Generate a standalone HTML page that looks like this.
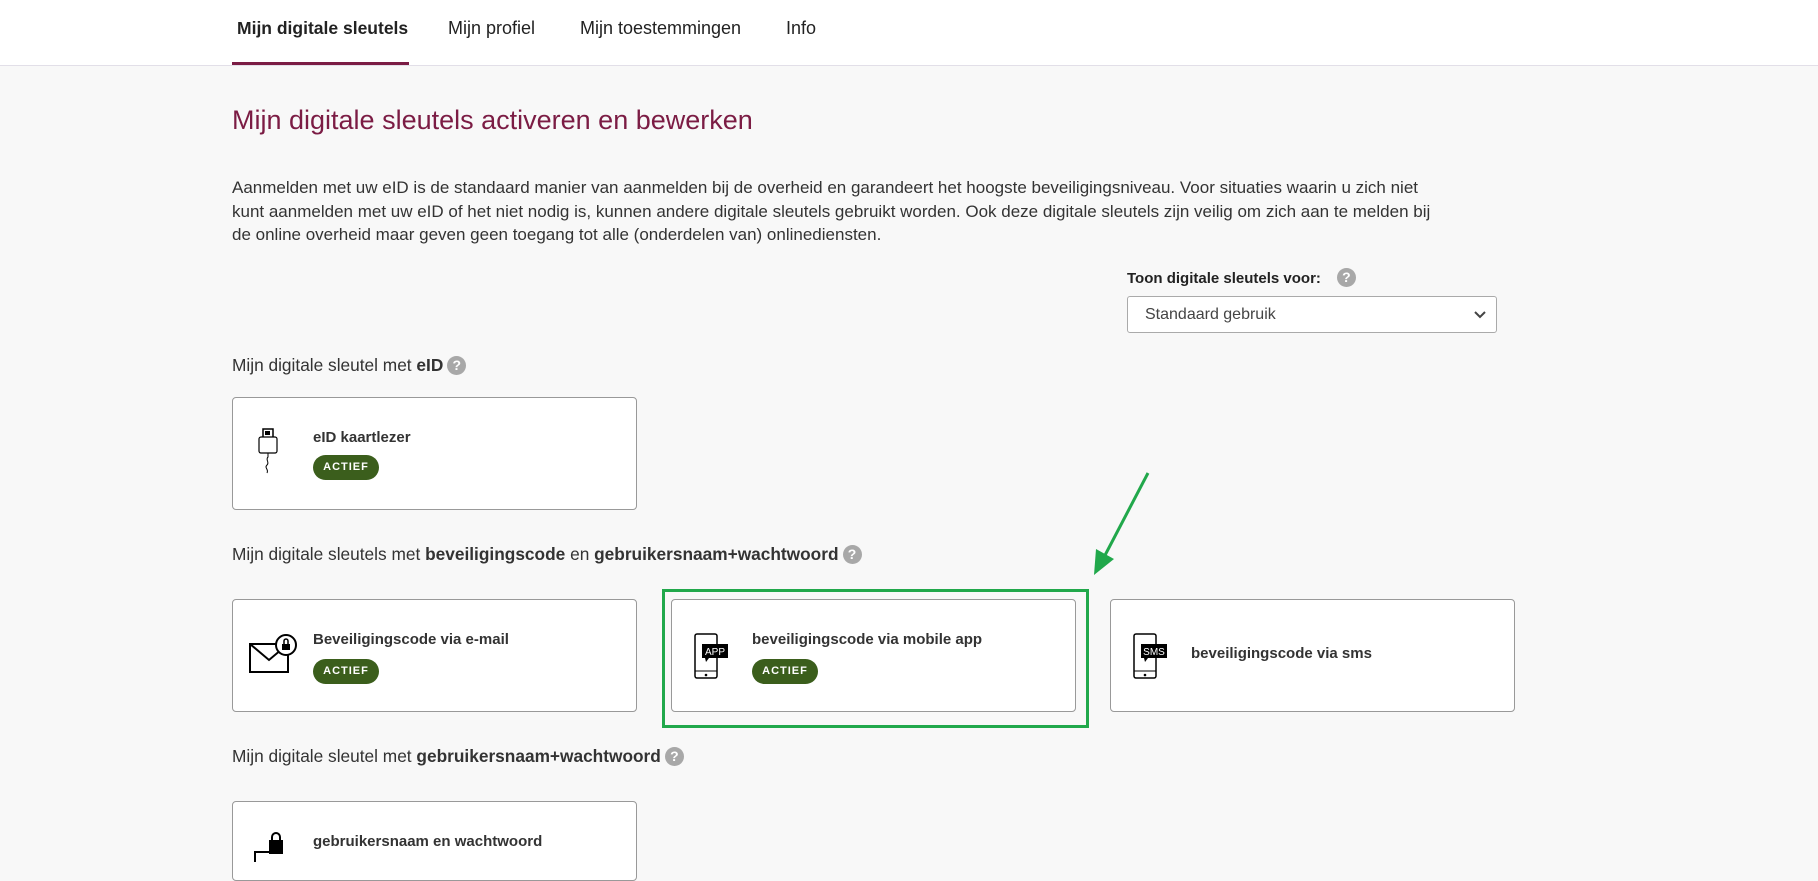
<!DOCTYPE html>
<html><head><meta charset="utf-8"><style>
*{box-sizing:border-box;margin:0;padding:0}
body{width:1818px;height:853px;overflow:hidden;background:#f8f8f8;font-family:"Liberation Sans",sans-serif;color:#333;position:relative}
.nav{position:absolute;left:0;top:0;width:1818px;height:66px;background:#fff;border-bottom:1px solid #e2dfe8}
.nav span{position:absolute;top:18px;font-size:18px;color:#222}
.ul{position:absolute;left:232px;top:62px;width:177px;height:3px;background:#7b1c44}
.a{position:absolute;white-space:nowrap}
h1{position:absolute;left:232px;top:105px;font-size:27px;font-weight:normal;color:#7b1c44}
.p{position:absolute;left:232px;top:176px;width:1500px;white-space:nowrap;font-size:17px;line-height:23.5px;color:#333}
.h2{font-size:17.3px;color:#333}
.q{display:inline-block;width:19px;height:19px;border-radius:50%;background:#a8a8a8;color:#fff;font-size:14px;font-weight:bold;text-align:center;line-height:19px;vertical-align:1px;margin-left:4px}
.card{position:absolute;width:405px;height:113px;background:#fff;border:1px solid #999;border-radius:4px}
.card .t{position:absolute;left:80px;font-size:15px;font-weight:bold;color:#333}
.badge{position:absolute;left:80px;width:66px;height:25px;border-radius:13px;background:#3b5e1c;color:#fff;font-size:11px;font-weight:bold;letter-spacing:1px;text-align:center;line-height:25px}
.card svg{position:absolute}
.sel{position:absolute;left:1127px;top:296px;width:370px;height:37px;background:#fff;border:1px solid #aaa;border-radius:3px;font-size:16px;color:#444;padding:9px 0 0 17px}
</style></head><body>
<div class="nav">
<span style="left:237px;font-weight:bold;font-size:17.5px">Mijn digitale sleutels</span>
<span style="left:448px">Mijn profiel</span>
<span style="left:580px">Mijn toestemmingen</span>
<span style="left:786px">Info</span>
</div>
<div class="ul"></div>
<h1>Mijn digitale sleutels activeren en bewerken</h1>
<div class="p">Aanmelden met uw eID is de standaard manier van aanmelden bij de overheid en garandeert het hoogste beveiligingsniveau. Voor situaties waarin u zich niet<br>kunt aanmelden met uw eID of het niet nodig is, kunnen andere digitale sleutels gebruikt worden. Ook deze digitale sleutels zijn veilig om zich aan te melden bij<br>de online overheid maar geven geen toegang tot alle (onderdelen van) onlinediensten.</div>
<div class="a" style="left:1127px;top:268px;font-size:15px;font-weight:bold;color:#222">Toon digitale sleutels voor:<span class="q" style="margin-left:16px">?</span></div>
<div class="sel">Standaard gebruik<svg style="position:absolute;right:10px;top:14px" width="12" height="8" viewBox="0 0 12 8"><path d="M1 1l5 5 5-5" stroke="#444" stroke-width="2" fill="none"/></svg></div>

<div class="a h2" style="left:232px;top:355px">Mijn digitale sleutel met <b>eID</b><span class="q">?</span></div>
<div class="card" style="left:232px;top:397px">
<svg style="left:25px;top:30px" width="20" height="50" viewBox="0 0 20 50"><rect x="5" y="1" width="10" height="9" fill="#fff" stroke="#000" stroke-width="1.5"/><rect x="7" y="3" width="5" height="4" fill="#000"/><rect x="1" y="9" width="18" height="16" rx="2" fill="#fff" stroke="#000" stroke-width="1.2"/><path d="M10 25v4c-3 3 2 5-1 8s2 4 0 8" stroke="#000" fill="none"/></svg>
<div class="t" style="top:31px">eID kaartlezer</div>
<div class="badge" style="top:57px">ACTIEF</div>
</div>

<div class="a h2" style="left:232px;top:544px">Mijn digitale sleutels met <b>beveiligingscode</b> en <b>gebruikersnaam+wachtwoord</b><span class="q">?</span></div>
<div class="card" style="left:232px;top:599px">
<svg style="left:16px;top:34px" width="48" height="40" viewBox="0 0 48 40"><rect x="1" y="10" width="38" height="28" fill="#fff" stroke="#000" stroke-width="2"/><path d="M1 10l19 16 19-16" stroke="#000" stroke-width="2" fill="none"/><circle cx="37" cy="11" r="10" fill="#fff" stroke="#000" stroke-width="2"/><rect x="33" y="10" width="8" height="6" fill="#000"/><path d="M35 10v-3a2 2 0 0 1 4 0v3" stroke="#000" fill="none" stroke-width="1.5"/></svg>
<div class="t" style="top:31px">Beveiligingscode via e-mail</div>
<div class="badge" style="top:59px">ACTIEF</div>
</div>
<div style="position:absolute;left:662px;top:589px;width:427px;height:139px;border:3px solid #21a84b"></div>
<div class="card" style="left:671px;top:599px">
<svg style="left:22px;top:33px" width="36" height="48" viewBox="0 0 36 48"><rect x="1" y="1" width="22" height="44" rx="2" fill="#fff" stroke="#000" stroke-width="1.5"/><line x1="1" y1="38" x2="23" y2="38" stroke="#000"/><circle cx="12" cy="42" r="1.3" fill="#000"/><rect x="8" y="11" width="26" height="14" fill="#000"/><path d="M11 25l1 4 3-4z" fill="#000"/><text x="21" y="22" font-size="10" fill="#fff" text-anchor="middle" font-family="Liberation Sans">APP</text></svg>
<div class="t" style="top:31px">beveiligingscode via mobile app</div>
<div class="badge" style="top:59px">ACTIEF</div>
</div>
<div class="card" style="left:1110px;top:599px">
<svg style="left:22px;top:33px" width="36" height="48" viewBox="0 0 36 48"><rect x="1" y="1" width="22" height="44" rx="2" fill="#fff" stroke="#000" stroke-width="1.5"/><line x1="1" y1="38" x2="23" y2="38" stroke="#000"/><circle cx="12" cy="42" r="1.3" fill="#000"/><rect x="8" y="11" width="26" height="14" fill="#000"/><path d="M11 25l1 4 3-4z" fill="#000"/><text x="21" y="22" font-size="10" fill="#fff" text-anchor="middle" font-family="Liberation Sans">SMS</text></svg>
<div class="t" style="top:45px">beveiligingscode via sms</div>
</div>

<svg style="position:absolute;left:1080px;top:465px" width="80" height="115" viewBox="0 0 80 115"><line x1="68" y1="8" x2="22" y2="96" stroke="#21a84b" stroke-width="3"/><path d="M14 110l2-26 18 10z" fill="#21a84b"/></svg>

<div class="a h2" style="left:232px;top:746px">Mijn digitale sleutel met <b>gebruikersnaam+wachtwoord</b><span class="q">?</span></div>
<div class="card" style="left:232px;top:801px;height:80px">
<svg style="left:20px;top:30px" width="40" height="30" viewBox="0 0 40 30"><rect x="16" y="8" width="14" height="14" fill="#000"/><path d="M19 8v-3a4 4 0 0 1 8 0v3" stroke="#000" stroke-width="2" fill="none"/><path d="M2 30v-10h14" stroke="#000" stroke-width="2" fill="none"/></svg>
<div class="t" style="top:31px">gebruikersnaam en wachtwoord</div>
</div>
</body></html>
